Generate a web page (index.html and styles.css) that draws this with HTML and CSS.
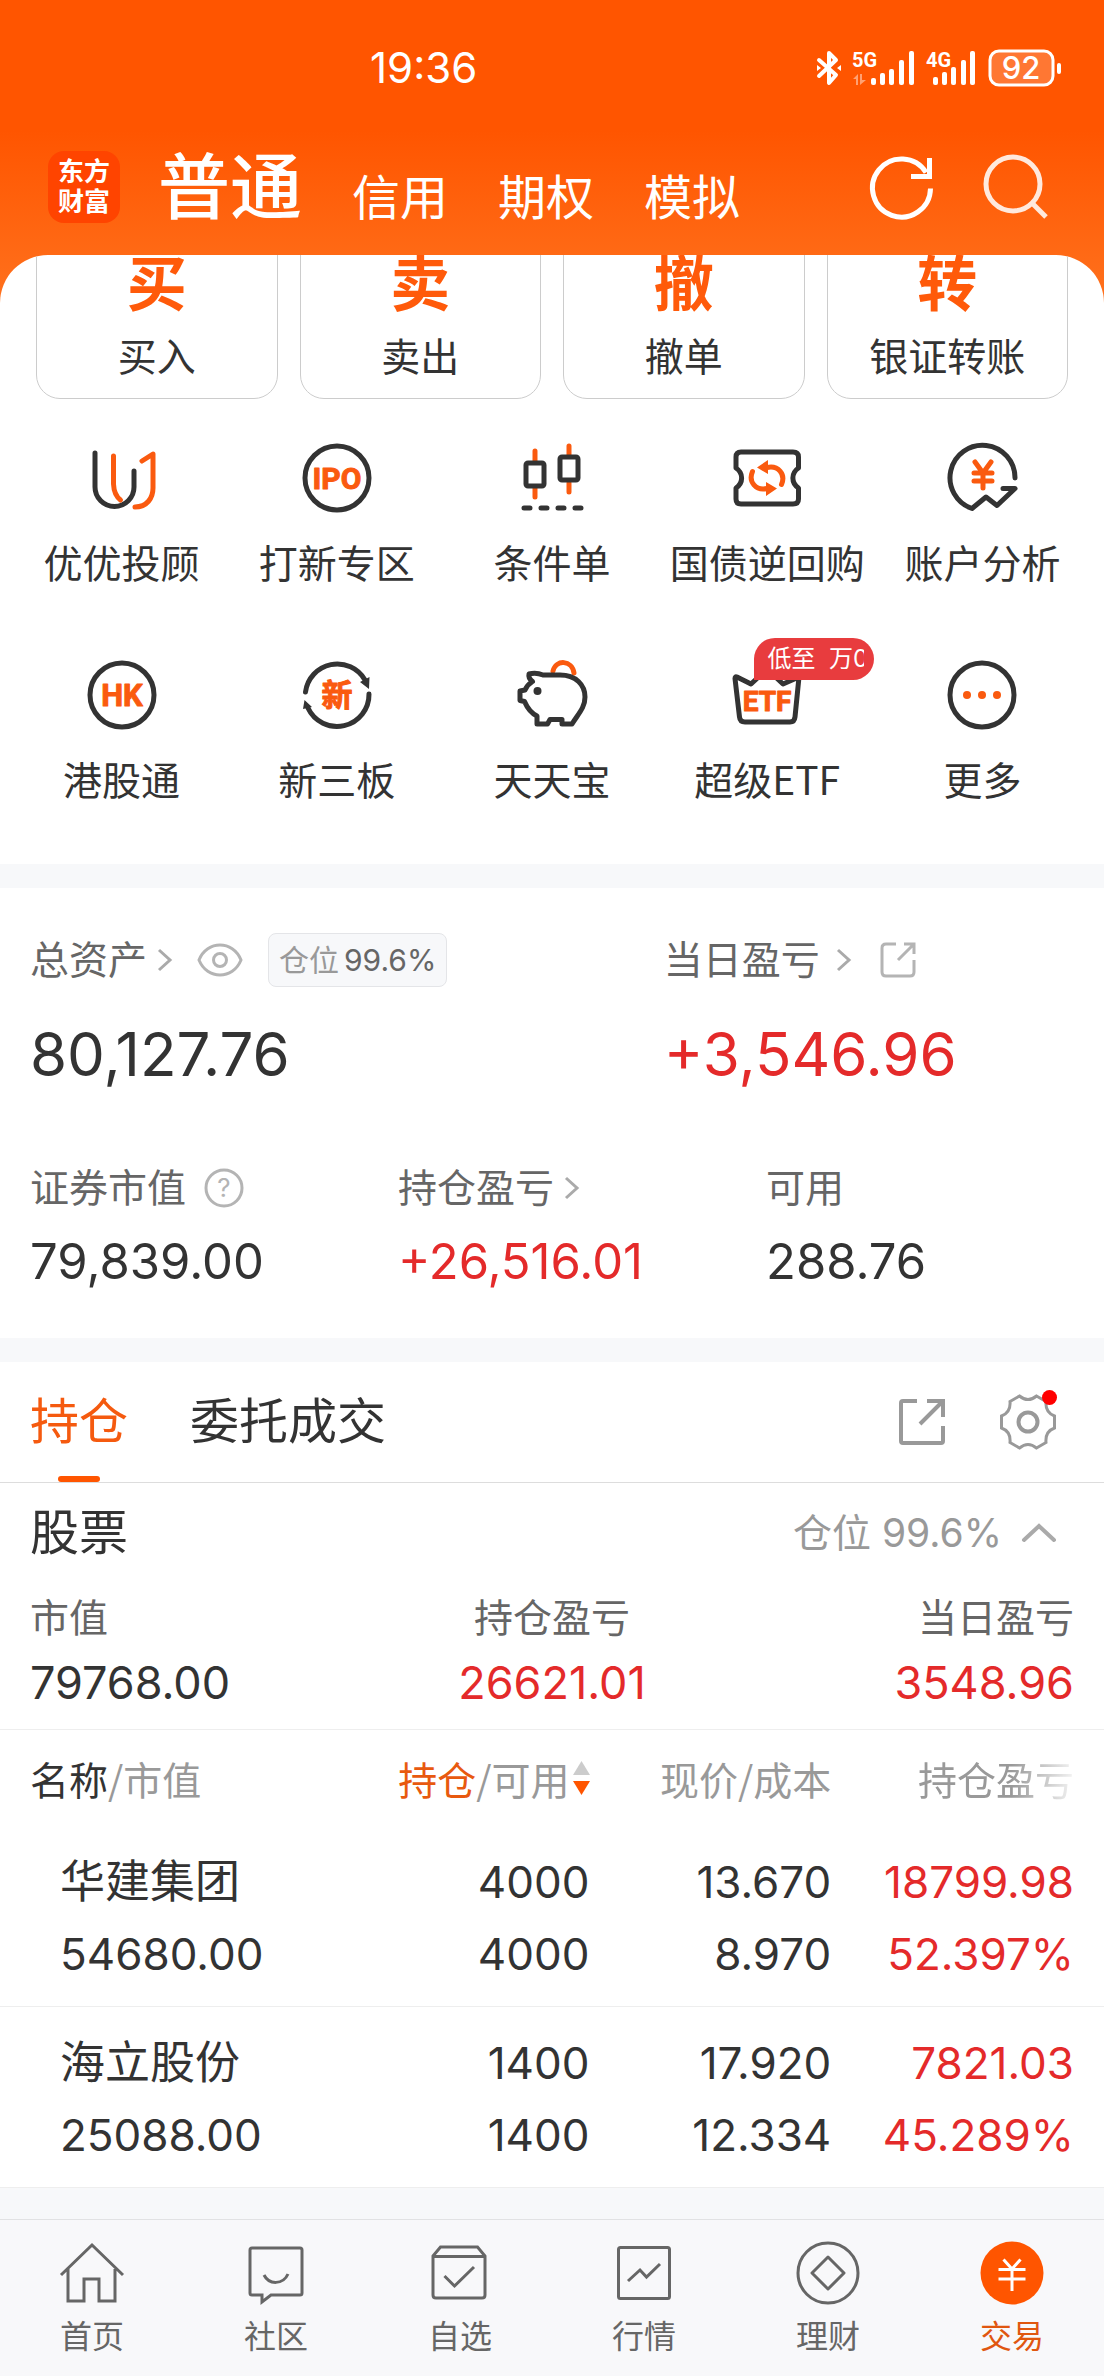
FILE: index.html
```html
<!DOCTYPE html>
<html lang="zh-CN">
<head>
<meta charset="utf-8">
<meta name="viewport" content="width=device-width, initial-scale=1">
<title>东方财富 - 交易</title>
<link rel="stylesheet" href="styles.css">
</head>
<body>
<div class="app">
  <header class="header">
    <div class="status">
      <time class="clock">19:36</time>
      <div class="status-icons">
        <svg width="26" height="36" viewBox="0 0 26 36" fill="none" stroke="#fff" stroke-width="4" stroke-linejoin="round" stroke-linecap="round"><path d="M3 10L20 25L13 33V3L20 10L3 26"/><path d="M1 15l4 3-4 3zM25 15l-4 3 4 3z" fill="#fff" stroke="none"/></svg>
        <svg width="64" height="36" viewBox="0 0 64 36" fill="#fff"><text x="0" y="17" class="net">5G</text><path opacity=".45" d="M1 29l5-5v11H4v-6zM8 24h2v6h4l-6 5z"/><rect x="19" y="28" width="5" height="7" rx="2"/><rect x="28" y="23" width="5" height="12" rx="2"/><rect x="37" y="19" width="5" height="16" rx="2"/><rect x="47" y="10" width="5" height="25" rx="2"/><rect x="57" y="1" width="5" height="34" rx="2"/></svg>
        <svg width="52" height="36" viewBox="0 0 52 36" fill="#fff"><text x="0" y="17" class="net">4G</text><rect x="7" y="27" width="5" height="8" rx="2"/><rect x="16" y="22" width="5" height="13" rx="2"/><rect x="25" y="17" width="5" height="18" rx="2"/><rect x="35" y="10" width="5" height="25" rx="2"/><rect x="44" y="1" width="5" height="34" rx="2"/></svg>
        <svg width="74" height="38" viewBox="0 0 74 38"><rect x="2" y="2" width="63" height="34" rx="9" fill="#fff" fill-opacity=".2" stroke="#fff" stroke-width="3"/><rect x="69" y="14" width="4" height="11" rx="2" fill="#fff"/><text x="33" y="30" class="battery">92</text></svg>
      </div>
    </div>
    <div class="titlebar">
      <a class="logo" href="#"><span>东方</span><span>财富</span></a>
      <nav class="accounts">
        <a class="account current" href="#">普通</a>
        <a class="account" href="#">信用</a>
        <a class="account" href="#">期权</a>
        <a class="account" href="#">模拟</a>
      </nav>
      <div class="tools">
        <button type="button" aria-label="刷新"><svg width="64" height="64" viewBox="0 0 64 64" fill="none" stroke="#fff" stroke-width="5"><path d="M60.500 33.500A29 29 0 1 1 56 17.500"/><path d="M59.500 3V21.500H41"/></svg></button>
        <button type="button" aria-label="搜索"><svg width="64" height="64" viewBox="0 0 64 64" fill="none" stroke="#ffe9dd" stroke-width="5"><circle cx="29" cy="29" r="27"/><path d="M48 48L62 62"/></svg></button>
      </div>
    </div>
  </header>

  <main>
    <section class="panel">
      <div class="trades">
        <a class="trade" href="#"><b>买</b><span>买入</span></a>
        <a class="trade" href="#"><b>卖</b><span>卖出</span></a>
        <a class="trade" href="#"><b>撤</b><span>撤单</span></a>
        <a class="trade" href="#"><b>转</b><span>银证转账</span></a>
      </div>
      <div class="services">
        <a class="service" href="#"><svg class="ic" viewBox="0 0 80 80"><path d="M13 15V49A19.500 19.500 0 0 0 52 49V33"/><path class="o" d="M31.500 18V46Q32 57 38.500 62M53 69C65 69 71 60 71 50V16L60 23"/></svg><span>优优投顾</span></a>
        <a class="service" href="#"><svg class="ic" viewBox="0 0 80 80"><circle cx="40" cy="40" r="32"/><text x="40" y="51" class="ipo">IPO</text></svg><span>打新专区</span></a>
        <a class="service" href="#"><svg class="ic" viewBox="0 0 80 80"><path class="o" d="M23 13V23M23 50V59M57 8V18M57 45V54"/><rect x="14" y="25" width="18" height="23" rx="2"/><rect x="48" y="19" width="18" height="23" rx="2"/><path stroke-dasharray="6 11" d="M12 70H69"/></svg><span>条件单</span></a>
        <a class="service" href="#"><svg class="ic" viewBox="0 0 80 80"><path d="M14 14H66Q71.500 14 71.500 19V30C64 35 64 45 71.500 50V61Q71.500 66 66 66H14Q9 66 9 61V50C16.500 45 16.500 35 9 30V19Q9 14 14 14Z"/><path class="o" d="M40 29.500C51 27 59 36 54.500 46.500M25.500 33.500C21 44 29 53 40 50.500"/><path class="f" d="M30 29.500L41 22V36ZM50 50.500L39 44V58Z"/></svg><span>国债逆回购</span></a>
        <a class="service" href="#"><svg class="ic" viewBox="0 0 80 80"><path d="M73 40A32.500 32.500 0 1 0 30 70.500L44 59L55 67.500L73 50.500H61"/><path class="o" d="M33 24L41 35L49 24M41 35V50M32 35H50M32 43H50"/></svg><span>账户分析</span></a>
        <a class="service" href="#"><svg class="ic" viewBox="0 0 80 80"><circle cx="40" cy="40" r="32"/><text x="40" y="51" class="hk">HK</text></svg><span>港股通</span></a>
        <a class="service" href="#"><svg class="ic" viewBox="0 0 80 80"><path d="M8.500 37A32 32 0 0 1 68 25M72 39A32 32 0 0 1 11 53"/><path class="d" d="M63 27L72.500 22L72 34ZM7.500 45L15 52L6 54Z"/><text x="40" y="51" class="han">新</text></svg><span>新三板</span></a>
        <a class="service" href="#"><svg class="ic" viewBox="0 0 80 80"><path class="o" d="M41 16C44 4 60 5 62 18"/><path d="M17 19Q24 17 31 20H48C64 20 73 30 73 42C73 53 66 59 60 69H50V64.500H38L35.500 69H25V61Q17 57 12.500 46.500L8 45.500V36L13 35Q15 30 20.500 26.500Q16 23 17 19Z"/><circle class="d" cx="25.500" cy="36" r="4"/></svg><span>天天宝</span></a>
        <a class="service" href="#"><svg class="ic" viewBox="0 0 80 80"><path d="M10 22L24 29L40 14L56 29L72 22L68 62Q67.500 67 63 67H18Q13 67 12.500 62L8 23.500Q8 21 10 22Z"/><text x="40" y="56" class="etf">ETF</text></svg><em class="badge"><i>低至&nbsp; 万0</i></em><span>超级ETF</span></a>
        <a class="service" href="#"><svg class="ic" viewBox="0 0 80 80"><circle cx="40" cy="40" r="32"/><g class="f"><circle cx="25" cy="40" r="4"/><circle cx="40" cy="40" r="4"/><circle cx="55" cy="40" r="4"/></g></svg><span>更多</span></a>
      </div>
    </section>

    <section class="assets">
      <div class="totals">
        <div>
          <div class="caption">
            <a href="#">总资产</a>
            <svg class="chev" width="16" height="24" viewBox="0 0 16 24"><path d="M2 2L13 12L2 22"/></svg>
            <button class="eye" type="button" aria-label="隐藏金额"><svg width="46" height="34" viewBox="0 0 46 34"><path d="M2 17C10 -3 36 -3 44 17C36 37 10 37 2 17Z"/><circle cx="23" cy="17" r="6.500"/></svg></button>
            <span class="ratio">仓位<b>99.6%</b></span>
          </div>
          <p class="big">80,127.76</p>
        </div>
        <div>
          <div class="caption">
            <a href="#">当日盈亏</a>
            <svg class="chev far" width="16" height="24" viewBox="0 0 16 24"><path d="M2 2L13 12L2 22"/></svg>
            <button class="share" type="button" aria-label="分享"><svg width="36" height="36" viewBox="0 0 36 36"><path d="M16 2H6Q2 2 2 6V30Q2 34 6 34H30Q34 34 34 30V18M18 18L34 2M24 2H34V12"/></svg></button>
          </div>
          <p class="big up">+3,546.96</p>
        </div>
      </div>
      <div class="details">
        <div>
          <div class="label">证券市值<svg class="help" width="40" height="40" viewBox="0 0 40 40"><circle cx="20" cy="20" r="18"/><text x="20" y="29">?</text></svg></div>
          <p class="mid">79,839.00</p>
        </div>
        <div>
          <div class="label">持仓盈亏<svg class="chev" width="16" height="24" viewBox="0 0 16 24"><path d="M2 2L13 12L2 22"/></svg></div>
          <p class="mid up">+26,516.01</p>
        </div>
        <div>
          <div class="label">可用</div>
          <p class="mid">288.76</p>
        </div>
      </div>
    </section>

    <section class="holdings">
      <div class="tabs">
        <button class="tab active" type="button">持仓</button>
        <button class="tab" type="button">委托成交</button>
        <button class="tool" type="button" aria-label="分享"><svg width="48" height="48" viewBox="0 0 48 48"><path d="M19 3H5Q3 3 3 5V43Q3 45 5 45H43Q45 45 45 43V28M22 26L45 3M29 3H45V19"/></svg></button>
        <button class="tool gear" type="button" aria-label="设置"><svg width="56" height="56" viewBox="0 0 56 56"><path stroke-width="3" d="M19.500 2Q28 9 36.500 2L46 7.500Q45 18.500 54.500 22V34Q45 37.500 46 48.500L36.500 54Q28 47 19.500 54L10 48.500Q11 37.500 1.500 34V22Q11 18.500 10 7.500Z"/><circle cx="28" cy="28" r="9.500"/></svg></button>
      </div>
      <div class="summary">
        <div class="group"><h2>股票</h2><span>仓位 99.6%</span><svg width="34" height="20" viewBox="0 0 34 20"><path d="M2 17L17 3L32 17"/></svg></div>
        <div class="sums">
          <div><div class="label">市值</div><p class="num">79768.00</p></div>
          <div><div class="label">持仓盈亏</div><p class="num up">26621.01</p></div>
          <div><div class="label">当日盈亏</div><p class="num up">3548.96</p></div>
        </div>
      </div>
      <table>
        <thead>
          <tr>
            <th scope="col"><b>名称</b>/市值</th>
            <th scope="col"><span class="sort"><span><b class="on">持仓</b>/可用</span><svg width="17" height="36" viewBox="0 0 17 36"><path d="M8.500 1L17 15H0Z" fill="#ccc"/><path d="M0 21H17L8.500 35Z" fill="#ff5500"/></svg></span></th>
            <th scope="col">现价/成本</th>
            <th scope="col"><span class="fade">持仓盈亏</span></th>
          </tr>
        </thead>
        <tbody>
          <tr><td><a href="#">华建集团</a><span>54680.00</span></td><td><span>4000</span><span>4000</span></td><td><span>13.670</span><span>8.970</span></td><td class="up"><span>18799.98</span><span>52.397%</span></td></tr>
          <tr><td><a href="#">海立股份</a><span>25088.00</span></td><td><span>1400</span><span>1400</span></td><td><span>17.920</span><span>12.334</span></td><td class="up"><span>7821.03</span><span>45.289%</span></td></tr>
        </tbody>
      </table>
    </section>
  </main>

  <nav class="tabbar">
    <a href="#"><svg viewBox="0 0 64 64"><path d="M1 34L32 4L63 34M8 28V60H24V38H39V60H55V28"/></svg>首页</a>
    <a href="#"><svg viewBox="0 0 64 64"><path d="M8 7H56Q58 7 58 9V52Q58 54 56 54H27L18 61V54H8Q6 54 6 52V9Q6 7 8 7ZM20 34C25 44 39 44 44 33"/></svg>社区</a>
    <a href="#"><svg viewBox="0 0 64 64"><path d="M5 15L12.500 6H49.500L57 15V54Q57 57 54 57H8Q5 57 5 54ZM5 15.500H57M16.500 35L26.500 45L46 26"/></svg>自选</a>
    <a href="#"><svg viewBox="0 0 64 64"><rect x="6.500" y="6.500" width="51" height="51" rx="2"/><path d="M16 40L28 29L34.500 36L48 23"/></svg>行情</a>
    <a href="#"><svg viewBox="0 0 64 64"><circle cx="32" cy="32" r="30"/><path stroke-linejoin="round" d="M32 16L48 32L32 48L16 32Z"/></svg>理财</a>
    <a class="active" href="#"><svg viewBox="0 0 64 64"><circle cx="32" cy="32" r="31.500" fill="#ff5500" stroke="none"/><path stroke="#fff" d="M23.500 18.500L32 28L40.500 18.500M32 28V50M18.500 28.500H45.500M18.500 38H45.500"/></svg>交易</a>
  </nav>
</div>
</body>
</html>
```
FILE: styles.css
```css
* { box-sizing: border-box; }

body {
  margin: 0;
  background: #f7f8fa;
  color: #333;
  font-family: Inter, "Noto Sans CJK SC", sans-serif;
  font-size: 39px;
  line-height: 40px;
}

a { color: inherit; text-decoration: none; }
button { padding: 0; border: 0; background: none; color: inherit; font: inherit; }
svg { display: block; flex: none; overflow: visible; }
p, h2 { margin: 0; font-weight: 400; }

.app {
  display: flex;
  flex-direction: column;
  min-height: 100vh;
  background: linear-gradient(#ff5500 130px, #ff7420 320px, #f7f8fa 320px);
}
main { flex: 1; }
.up { color: #e42a2a; }

/* header */
.status {
  display: flex;
  align-items: center;
  justify-content: space-between;
  height: 136px;
  padding: 0 42px 0 370px;
  color: #fff;
}
.clock { font-size: 42px; }
.status-icons { display: flex; align-items: center; gap: 10px; }
.net { font: 700 20px Roboto, sans-serif; }
.battery { font: 500 31px Inter, sans-serif; fill: #fff; text-anchor: middle; }

.titlebar {
  display: flex;
  align-items: center;
  height: 102px;
  margin-bottom: 17px;
  padding: 0 56px 0 48px;
  color: #fff;
}
.logo {
  display: flex;
  flex-direction: column;
  justify-content: center;
  align-items: center;
  width: 72px;
  height: 72px;
  border-radius: 16px;
  background: #ff4400;
  font-size: 26px;
  font-weight: 700;
  line-height: 30px;
}
.accounts { display: flex; align-items: flex-end; gap: 50px; margin-left: 38px; font-size: 48px; line-height: 50px; }
.current { font-size: 72px; font-weight: 500; line-height: 72px; }
.tools { display: flex; gap: 50px; margin-left: auto; }

/* shortcuts */
.panel {
  overflow: hidden;
  padding-bottom: 66px;
  border-radius: 48px 48px 0 0;
  background: #fff;
  font-family: "Noto Sans CJK SC", sans-serif;
}
.trades { display: grid; grid-template-columns: repeat(4, 1fr); gap: 22px; margin-top: -24px; padding: 0 36px; }
.trade {
  display: flex;
  flex-direction: column;
  align-items: center;
  gap: 24px;
  padding: 18px 0 24px;
  border: 1px solid #ccc;
  border-radius: 24px;
}
.trade b { color: #ff5a0a; font-size: 60px; font-weight: 700; line-height: 60px; }
.services { display: grid; grid-template-columns: repeat(5, 1fr); row-gap: 74px; margin-top: 39px; padding: 0 14px; }
.service { position: relative; display: flex; flex-direction: column; align-items: center; gap: 23px; white-space: nowrap; }
.ic { width: 80px; height: 80px; fill: none; stroke: #333; stroke-width: 5; stroke-linecap: round; stroke-linejoin: round; }
.ic .o { stroke: #fa5a0f; }
.ic .f { fill: #fa5a0f; stroke: none; }
.ic .d { fill: #333; stroke: none; }
.ic text { fill: #fa5a0f; stroke: #fa5a0f; stroke-width: 1; text-anchor: middle; }
.ipo { font: 700 30px Roboto, sans-serif; }
.hk { font: 700 31px Roboto, sans-serif; }
.etf { font: 700 28px Roboto, sans-serif; }
.han { font: 700 31px "Noto Sans CJK SC", sans-serif; }
.badge {
  position: absolute;
  top: -17px;
  left: 94px;
  width: 120px;
  height: 42px;
  padding: 0 10px 0 12px;
  border-radius: 21px 21px 21px 0;
  background: #e83c3e;
  color: #fff;
  font-family: Inter, "Noto Sans CJK SC", sans-serif;
  font-size: 24px;
  font-style: normal;
  line-height: 42px;
}
.badge i { display: block; overflow: hidden; padding-left: 2px; font-style: normal; }

/* assets */
.assets { margin-top: 24px; padding: 45px 0 48px; background: #fff; }
.totals { display: grid; grid-template-columns: 17fr 11fr; padding: 0 30px; }
.caption { display: flex; align-items: center; height: 54px; color: #666; white-space: nowrap; }
.chev { margin-left: 10px; fill: none; stroke: #aaa; stroke-width: 3; }
.chev.far { margin-left: 16px; }
.eye { margin-left: 24px; }
.share { margin-left: 28px; }
.eye svg, .share svg { fill: none; stroke: #b4b4b4; stroke-width: 3; }
.ratio {
  margin-left: 25px;
  padding: 0 10px;
  border: 1px solid #e4e5e8;
  border-radius: 8px;
  background: #f7f8fa;
  color: #999;
  font-size: 30px;
  line-height: 52px;
}
.ratio b { margin-left: 5px; color: #666; font-weight: 400; }
.big { margin-top: 31px; font-size: 60px; line-height: 72px; }
.details { display: grid; grid-template-columns: repeat(3, 1fr); margin-top: 78px; }
.details > div { padding-left: 30px; }
.label { display: flex; align-items: center; height: 40px; color: #666; }
.help { margin-left: 18px; fill: none; stroke: #b4b4b4; stroke-width: 3; }
.help text { font: 26px Inter, sans-serif; fill: #b4b4b4; stroke: none; text-anchor: middle; }
.mid { margin-top: 26px; font-size: 49px; line-height: 56px; }

/* holdings */
.holdings { margin-top: 24px; background: #fff; }
.tabs { display: flex; align-items: center; gap: 62px; height: 121px; padding: 0 48px 0 30px; border-bottom: 1px solid #ddd; }
.tab { position: relative; align-self: stretch; font-size: 49px; }
.tab.active { color: #f55a0f; }
.tab.active::after {
  content: "";
  position: absolute;
  bottom: 0;
  left: 28px;
  width: 42px;
  height: 6px;
  border-radius: 3px;
  background: #ff5500;
}
.tool { position: relative; margin-left: auto; }
.tool svg { fill: none; stroke: #999; stroke-width: 4; }
.gear { margin-left: -8px; }
.gear::after {
  content: "";
  position: absolute;
  top: -4px;
  right: -1px;
  width: 15px;
  height: 15px;
  border-radius: 50%;
  background: #f00;
}
.summary { padding: 22px 30px 20px; border-bottom: 1px solid #eee; }
.group { display: flex; align-items: center; padding-right: 18px; color: #999; line-height: 56px; }
.group h2 { margin-right: auto; color: #333; font-size: 49px; }
.group svg { margin-left: 20px; fill: none; stroke: #aaa; stroke-width: 4; stroke-linecap: round; }
.sums { display: grid; grid-template-columns: repeat(3, 1fr); margin-top: 37px; }
.sums > div { display: flex; flex-direction: column; align-items: center; }
.sums > div:first-child { align-items: flex-start; }
.sums > div:last-child { align-items: flex-end; }
.num { margin-top: 19px; font-size: 45px; line-height: 52px; }

table { width: 100%; border-collapse: collapse; table-layout: fixed; }
th, td { padding: 0; font-weight: 400; text-align: right; }
th { height: 96px; color: #999; font-family: "Noto Sans CJK SC", sans-serif; white-space: nowrap; }
th:first-child { width: 30%; padding-left: 30px; text-align: left; }
th:nth-child(2) { width: 23.4%; }
th:nth-child(3) { width: 21.9%; }
th:last-child, td:last-child { padding-right: 30px; }
th b { color: #333; font-weight: 400; }
th .on { color: #e8590f; }
.sort { display: flex; justify-content: flex-end; align-items: center; gap: 3px; }
.fade { -webkit-mask-image: linear-gradient(to right, #000 60%, transparent 105%); mask-image: linear-gradient(to right, #000 60%, transparent 105%); }
td { padding: 20px 0 16px; border-bottom: 1px solid #eee; font-size: 44px; line-height: 72px; }
td:first-child { padding-left: 60px; text-align: left; }
td a, td span { display: block; }
td a { font-size: 45px; }

/* bottom navigation */
.tabbar {
  display: grid;
  grid-template-columns: repeat(6, 1fr);
  margin-top: 31px;
  padding: 21px 0;
  border-top: 1px solid #e2e2e4;
  background: #f8f8fa;
  color: #666;
  font-size: 32px;
  line-height: 36px;
}
.tabbar a { display: flex; flex-direction: column; align-items: center; gap: 14px; }
.tabbar svg { width: 64px; height: 64px; fill: none; stroke: #666; stroke-width: 3; }
.tabbar .active { color: #e0560f; }
```
